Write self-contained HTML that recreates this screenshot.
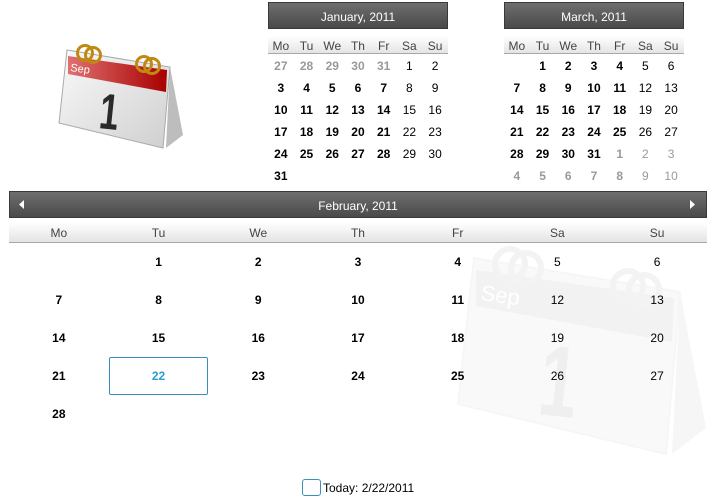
<!DOCTYPE html>
<html><head><meta charset="utf-8"><style>
body{margin:0;width:715px;height:500px;background:#fff;font-family:"Liberation Sans",sans-serif;font-size:12px;color:#000;position:relative;overflow:hidden}
.hdr{position:absolute;height:27px;background:linear-gradient(#6e6e6e,#4a4a4a);border:1px solid #3a3a3a;box-sizing:border-box;color:#fff;text-align:center;line-height:28px;font-size:12px}
.dn{position:absolute;background:linear-gradient(#fff,#e4e4e4);border-bottom:1px solid #a8a8a8;box-sizing:border-box}
table{position:absolute;border-collapse:collapse;table-layout:fixed}
td{padding:0;text-align:center}
.s td{height:22px;font-size:12px}
.s tr.h td{height:18px;color:#444}
.b{font-weight:bold}
.g{color:#999}
.f td{height:38px;font-size:12px}
.f tr.h td{height:20px;color:#444}
.sel{outline:1px solid #3a8fbf;outline-offset:-1px;border-radius:2px;color:#2a9fd0}
</style></head><body>

<svg style="position:absolute;left:456px;top:246px;opacity:0.07" width="260" height="230" viewBox="0 0 130 115">
<polygon points="112,23 125,91 108,104" fill="#888"/>
<polygon points="9,6 112,23 105,104 1,79" fill="#bbb" stroke="#888"/>
<polygon points="10,12 109,26 108,48 10,30" fill="#555"/>
<text x="12" y="27" font-size="11" fill="#fff" transform="rotate(8 12 27)" font-family="Liberation Sans">Sep</text>
<text x="0" y="0" font-size="46" font-weight="bold" fill="#333" transform="translate(40,84) rotate(6) scale(0.75,1.1)" font-family="Liberation Sans">1</text>
<circle cx="27" cy="9" r="7.5" fill="none" stroke="#666" stroke-width="3"/><circle cx="35" cy="11" r="7.5" fill="none" stroke="#666" stroke-width="3"/>
<circle cx="86" cy="20" r="7.5" fill="none" stroke="#666" stroke-width="3"/><circle cx="94" cy="22" r="7.5" fill="none" stroke="#666" stroke-width="3"/>
</svg>

<svg style="position:absolute;left:58px;top:44px" width="130" height="115" viewBox="0 0 130 115">
<defs><linearGradient id="r" x1="0" x2="1"><stop offset="0" stop-color="#e07070"/><stop offset="1" stop-color="#a80000"/></linearGradient>
<linearGradient id="w" x1="0" y1="0" x2="1" y2="1"><stop offset="0" stop-color="#fafafa"/><stop offset="1" stop-color="#cfcfcf"/></linearGradient></defs>
<polygon points="112,23 125,91 108,104" fill="#bdbdbd"/>
<polygon points="9,6 112,23 105,104 1,79" fill="url(#w)" stroke="#aaa"/>
<polygon points="10,12 109,26 108,48 10,30" fill="url(#r)"/>
<text x="12" y="27" font-size="11" fill="#fff" transform="rotate(8 12 27)" font-family="Liberation Sans">Sep</text>
<text x="0" y="0" font-size="46" font-weight="bold" fill="#2a2a2a" transform="translate(40,84) rotate(6) scale(0.75,1.1)" font-family="Liberation Sans">1</text>
<circle cx="27" cy="9" r="7.5" fill="none" stroke="#c08a10" stroke-width="3"/><circle cx="35" cy="11" r="7.5" fill="none" stroke="#c08a10" stroke-width="3"/>
<circle cx="86" cy="20" r="7.5" fill="none" stroke="#c08a10" stroke-width="3"/><circle cx="94" cy="22" r="7.5" fill="none" stroke="#c08a10" stroke-width="3"/>
</svg>

<div class="hdr" style="left:268px;top:2px;width:180px">January, 2011</div>
<div class="dn" style="left:268px;top:36px;width:180px;height:18px"></div>
<table class="s" style="left:268px;top:37px;width:180px">
<tr class="h"><td>Mo</td><td>Tu</td><td>We</td><td>Th</td><td>Fr</td><td>Sa</td><td>Su</td></tr>
<tr><td class="g b">27</td><td class="g b">28</td><td class="g b">29</td><td class="g b">30</td><td class="g b">31</td><td>1</td><td>2</td></tr>
<tr><td class="b">3</td><td class="b">4</td><td class="b">5</td><td class="b">6</td><td class="b">7</td><td>8</td><td>9</td></tr>
<tr><td class="b">10</td><td class="b">11</td><td class="b">12</td><td class="b">13</td><td class="b">14</td><td>15</td><td>16</td></tr>
<tr><td class="b">17</td><td class="b">18</td><td class="b">19</td><td class="b">20</td><td class="b">21</td><td>22</td><td>23</td></tr>
<tr><td class="b">24</td><td class="b">25</td><td class="b">26</td><td class="b">27</td><td class="b">28</td><td>29</td><td>30</td></tr>
<tr><td class="b">31</td><td></td><td></td><td></td><td></td><td></td><td></td></tr>
</table>

<div class="hdr" style="left:504px;top:2px;width:180px">March, 2011</div>
<div class="dn" style="left:504px;top:36px;width:180px;height:18px"></div>
<table class="s" style="left:504px;top:37px;width:180px">
<tr class="h"><td>Mo</td><td>Tu</td><td>We</td><td>Th</td><td>Fr</td><td>Sa</td><td>Su</td></tr>
<tr><td></td><td class="b">1</td><td class="b">2</td><td class="b">3</td><td class="b">4</td><td>5</td><td>6</td></tr>
<tr><td class="b">7</td><td class="b">8</td><td class="b">9</td><td class="b">10</td><td class="b">11</td><td>12</td><td>13</td></tr>
<tr><td class="b">14</td><td class="b">15</td><td class="b">16</td><td class="b">17</td><td class="b">18</td><td>19</td><td>20</td></tr>
<tr><td class="b">21</td><td class="b">22</td><td class="b">23</td><td class="b">24</td><td class="b">25</td><td>26</td><td>27</td></tr>
<tr><td class="b">28</td><td class="b">29</td><td class="b">30</td><td class="b">31</td><td class="g b">1</td><td class="g">2</td><td class="g">3</td></tr>
<tr><td class="g b">4</td><td class="g b">5</td><td class="g b">6</td><td class="g b">7</td><td class="g b">8</td><td class="g">9</td><td class="g">10</td></tr>
</table>

<div class="hdr" style="left:9px;top:191px;width:698px">February, 2011</div>
<svg style="position:absolute;left:19px;top:200px" width="6" height="9"><polygon points="5,0 5,9 0,4.5" fill="#fff"/></svg>
<svg style="position:absolute;left:690px;top:200px" width="6" height="9"><polygon points="0,0 0,9 5,4.5" fill="#fff"/></svg>
<div class="dn" style="left:9px;top:222px;width:698px;height:21px"></div>
<table class="f" style="left:9px;top:223px;width:698px">
<tr class="h"><td>Mo</td><td>Tu</td><td>We</td><td>Th</td><td>Fr</td><td>Sa</td><td>Su</td></tr>
<tr><td></td><td class="b">1</td><td class="b">2</td><td class="b">3</td><td class="b">4</td><td>5</td><td>6</td></tr>
<tr><td class="b">7</td><td class="b">8</td><td class="b">9</td><td class="b">10</td><td class="b">11</td><td>12</td><td>13</td></tr>
<tr><td class="b">14</td><td class="b">15</td><td class="b">16</td><td class="b">17</td><td class="b">18</td><td>19</td><td>20</td></tr>
<tr><td class="b">21</td><td class="b sel">22</td><td class="b">23</td><td class="b">24</td><td class="b">25</td><td>26</td><td>27</td></tr>
<tr><td class="b">28</td><td></td><td></td><td></td><td></td><td></td><td></td></tr>
</table>

<div style="position:absolute;left:302px;top:479px;width:17px;height:15px;border:1px solid #3a8fbf;border-radius:3px"></div>
<div style="position:absolute;left:323px;top:480px;font-size:12px;line-height:16px">Today: 2/22/2011</div>
</body></html>
